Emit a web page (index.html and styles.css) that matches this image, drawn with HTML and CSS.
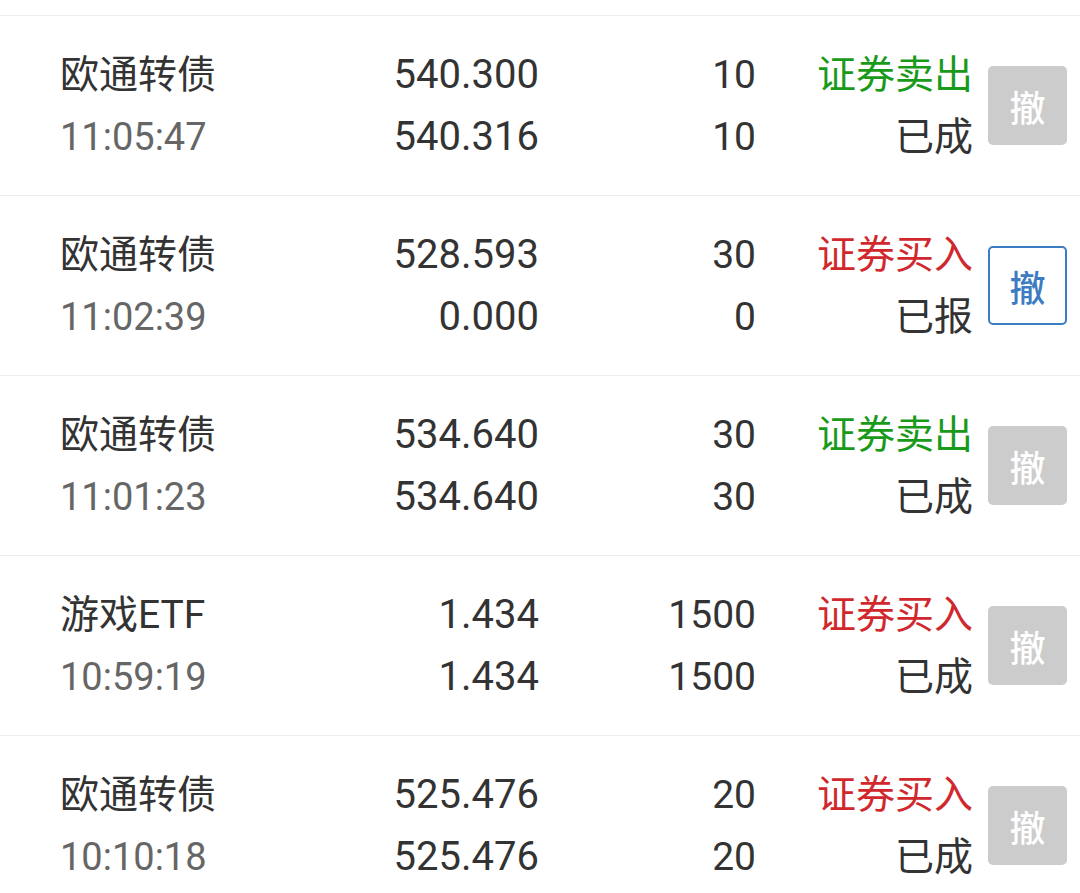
FILE: index.html
```html
<!DOCTYPE html>
<html lang="zh-CN">
<head>
<meta charset="utf-8">
<link rel="stylesheet" href="styles.css">
</head>
<body>
<div class="list">
  <div class="row">
    <div class="cell name"><div class="l1">欧通转债</div><div class="l2 time">11:05:47</div></div>
    <div class="cell num price"><div class="l1">540.300</div><div class="l2">540.316</div></div>
    <div class="cell num"><div class="l1">10</div><div class="l2">10</div></div>
    <div class="cell num"><div class="l1 sell">证券卖出</div><div class="l2">已成</div></div>
    <div class="btn off">撤</div>
  </div>
  <div class="row">
    <div class="cell name"><div class="l1">欧通转债</div><div class="l2 time">11:02:39</div></div>
    <div class="cell num price"><div class="l1">528.593</div><div class="l2">0.000</div></div>
    <div class="cell num"><div class="l1">30</div><div class="l2">0</div></div>
    <div class="cell num"><div class="l1 buy">证券买入</div><div class="l2">已报</div></div>
    <div class="btn on">撤</div>
  </div>
  <div class="row">
    <div class="cell name"><div class="l1">欧通转债</div><div class="l2 time">11:01:23</div></div>
    <div class="cell num price"><div class="l1">534.640</div><div class="l2">534.640</div></div>
    <div class="cell num"><div class="l1">30</div><div class="l2">30</div></div>
    <div class="cell num"><div class="l1 sell">证券卖出</div><div class="l2">已成</div></div>
    <div class="btn off">撤</div>
  </div>
  <div class="row">
    <div class="cell name"><div class="l1">游戏ETF</div><div class="l2 time">10:59:19</div></div>
    <div class="cell num price"><div class="l1">1.434</div><div class="l2">1.434</div></div>
    <div class="cell num"><div class="l1">1500</div><div class="l2">1500</div></div>
    <div class="cell num"><div class="l1 buy">证券买入</div><div class="l2">已成</div></div>
    <div class="btn off">撤</div>
  </div>
  <div class="row">
    <div class="cell name"><div class="l1">欧通转债</div><div class="l2 time">10:10:18</div></div>
    <div class="cell num price"><div class="l1">525.476</div><div class="l2">525.476</div></div>
    <div class="cell num"><div class="l1">20</div><div class="l2">20</div></div>
    <div class="cell num"><div class="l1 buy">证券买入</div><div class="l2">已成</div></div>
    <div class="btn off">撤</div>
  </div>
</div>
</body>
</html>
```
FILE: styles.css
```css
html, body {
  margin: 0;
  padding: 0;
  background: #fff;
  height: 893px;
  overflow: hidden;
}
body {
  font-family: "Roboto", "Noto Sans CJK SC", sans-serif;
  color: #333;
}
.list {
  padding-top: 15px;
}
.row {
  box-sizing: border-box;
  height: 180px;
  border-top: 1px solid #eeeeee;
  display: grid;
  grid-template-columns: 202px 277px 217px 217px 94px;
  align-items: center;
  padding: 0 13px 0 60px;
}
.row .btn {
  margin-left: 15px;
}
.cell {
  font-size: 39px;
  line-height: 62px;
  white-space: nowrap;
}
.cell > div {
  height: 62px;
}
.num {
  text-align: right;
}
.price {
  font-size: 40px;
}
.time {
  color: #666;
  font-size: 38px;
}
.sell {
  color: #1a9a1a;
}
.buy {
  color: #d0282c;
}
.btn {
  box-sizing: border-box;
  width: 79px;
  height: 79px;
  border-radius: 5px;
  display: flex;
  align-items: center;
  justify-content: center;
  font-family: "Noto Sans CJK SC", sans-serif;
  font-size: 36px;
  font-weight: 500;
}
.btn.off {
  background: #cccccc;
  color: #fff;
}
.btn.on {
  border: 2px solid #3c7cc2;
  color: #3c7cc2;
  background: #fff;
}
```
